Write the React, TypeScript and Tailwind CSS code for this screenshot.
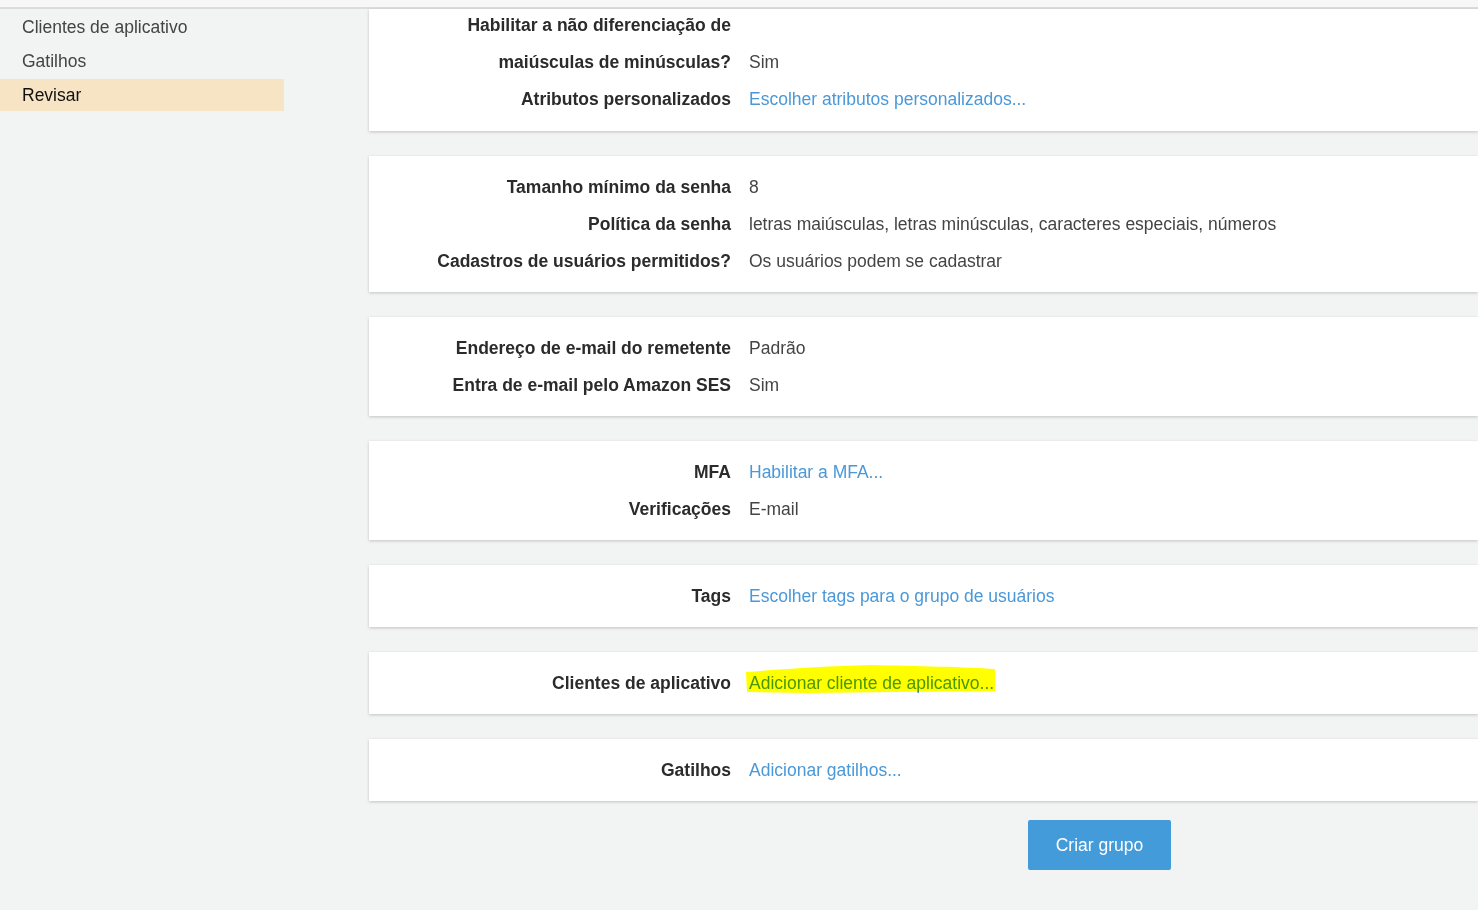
import React from 'react';

type Row = { label: string; value: string; link?: boolean; mark?: boolean };

const sections: Row[][] = [
  [
    { label: 'Habilitar a não diferenciação de', value: '' },
    { label: 'maiúsculas de minúsculas?', value: 'Sim' },
    { label: 'Atributos personalizados', value: 'Escolher atributos personalizados...', link: true },
  ],
  [
    { label: 'Tamanho mínimo da senha', value: '8' },
    { label: 'Política da senha', value: 'letras maiúsculas, letras minúsculas, caracteres especiais, números' },
    { label: 'Cadastros de usuários permitidos?', value: 'Os usuários podem se cadastrar' },
  ],
  [
    { label: 'Endereço de e-mail do remetente', value: 'Padrão' },
    { label: 'Entra de e-mail pelo Amazon SES', value: 'Sim' },
  ],
  [
    { label: 'MFA', value: 'Habilitar a MFA...', link: true },
    { label: 'Verificações', value: 'E-mail' },
  ],
  [{ label: 'Tags', value: 'Escolher tags para o grupo de usuários', link: true }],
  [{ label: 'Clientes de aplicativo', value: 'Adicionar cliente de aplicativo...', link: true, mark: true }],
  [{ label: 'Gatilhos', value: 'Adicionar gatilhos...', link: true }],
];

const menu = ['Clientes de aplicativo', 'Gatilhos', 'Revisar'];

function Value({ row }: { row: Row }) {
  if (!row.link) return <span className="text-[#444]">{row.value}</span>;
  if (!row.mark) return <span className="text-[#4a98d8]">{row.value}</span>;
  // highlighter stroke laid over the link
  return (
    <span className="relative inline-block text-[#4a98d8]">
      {row.value}
      <svg
        className="absolute -left-[3px] -top-[5px] mix-blend-multiply pointer-events-none"
        width="250"
        height="30"
        viewBox="0 0 250 30"
      >
        <path d="M0 7 C 40 4, 80 1, 125 0 C 170 1, 220 2, 249 4 L 249 26 L 150 27 L 60 28 L 1 27 Z" fill="#ffff00" />
      </svg>
    </span>
  );
}

export default function App() {
  return (
    <div className="min-h-[910px] bg-[#f2f3f3] text-[17.5px]" style={{ fontFamily: '"Liberation Sans", Arial, sans-serif' }}>
      <div className="h-[7px] bg-[#f7f7f7]" />
      <div className="h-[2px] bg-[#dcdce0]" />

      <div className="flex">
        {/* Side navigation */}
        <nav className="w-[369px] shrink-0 pt-[2px] flex flex-col gap-[2px]">
          {menu.map((m) => (
            <div
              key={m}
              className={
                m === 'Revisar'
                  ? 'w-[284px] h-[32px] pl-[22px] pt-[1px] flex items-center bg-[#f7e4c5] text-[#111]'
                  : 'w-[284px] h-[32px] pl-[22px] pt-[1px] flex items-center text-[#444]'
              }
            >
              {m}
            </div>
          ))}
        </nav>

        {/* Review cards */}
        <main className="flex-1 flex flex-col gap-[25px]">
          {sections.map((rows, i) => (
            <div
              key={i}
              className={
                i === 0
                  ? 'bg-white shadow-[0_1px_3px_rgba(0,0,0,0.2)] pb-[13px] overflow-hidden'
                  : 'bg-white shadow-[0_1px_3px_rgba(0,0,0,0.2)] pt-[13px] pb-[12px]'
              }
            >
              <div className={i === 0 ? '-mt-[2px]' : ''}>
                {rows.map((r) => (
                  <div key={r.label} className="flex h-[37px] items-center">
                    <div className="w-[362px] shrink-0 text-right font-bold text-[#2b2b2b]">{r.label}</div>
                    <div className="pl-[18px] whitespace-nowrap">
                      <Value row={r} />
                    </div>
                  </div>
                ))}
              </div>
            </div>
          ))}

          <div className="-mt-[6px] pl-[659px]">
            <button className="w-[143px] h-[50px] bg-[#439bd9] text-white rounded-[2px]">Criar grupo</button>
          </div>
        </main>
      </div>
    </div>
  );
}
